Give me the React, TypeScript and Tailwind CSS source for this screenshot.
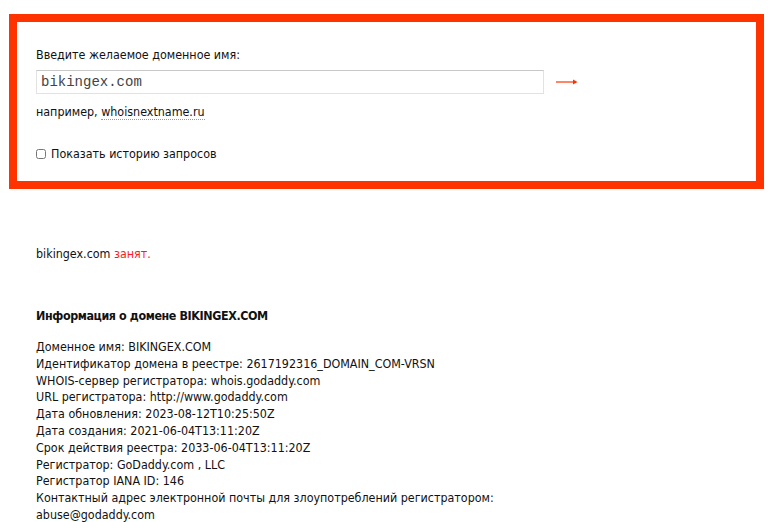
import React from 'react'

const whois = [
  'Доменное имя: BIKINGEX.COM',
  'Идентификатор домена в реестре: 2617192316_DOMAIN_COM-VRSN',
  'WHOIS-сервер регистратора: whois.godaddy.com',
  'URL регистратора: http://www.godaddy.com',
  'Дата обновления: 2023-08-12T10:25:50Z',
  'Дата создания: 2021-06-04T13:11:20Z',
  'Срок действия реестра: 2033-06-04T13:11:20Z',
  'Регистратор: GoDaddy.com , LLC',
  'Регистратор IANA ID: 146',
  'Контактный адрес электронной почты для злоупотреблений регистратором:',
  'abuse@godaddy.com',
]

const App = () => {
  return (
    <div className="min-h-[522px] bg-white text-[#111] text-[12.4px] font-['DejaVu_Sans_Condensed','DejaVu_Sans',sans-serif] pt-[14px]">
      <div className="ml-[9px] mr-[4px] border-[8px] border-[#ff3300] pl-[19px] pt-[24px] pb-[19px]">
        <p className="leading-[17px]">Введите желаемое доменное имя:</p>
        <div className="flex items-center mt-[7px]">
          <input
            defaultValue="bikingex.com"
            className="w-[508px] h-[24px] border border-[#e2e2e2] border-t-[#c8c8c8] px-[4px] font-['Liberation_Mono',monospace] text-[14px] text-[#444] outline-none"
          />
          <svg width="22" height="8" viewBox="0 0 22 8" className="ml-[12px] -mt-[1px]">
            <line x1="0" y1="4" x2="20" y2="4" stroke="#ff3300" strokeWidth="1.2" />
            <path d="M17 1.5 L21.5 4 L17 6.5 Z" fill="#ff3300" />
          </svg>
        </div>
        <p className="leading-[17px] mt-[9px]">
          например, <a className="border-b border-dotted border-[#999]">whoisnextname.ru</a>
        </p>
        <label className="flex items-center leading-[17px] mt-[25px]">
          <input type="checkbox" className="w-[10px] h-[10px] mr-[5px]" />
          Показать историю запросов
        </label>
      </div>

      <div className="px-[36px]">
        <p className="leading-[17px] mt-[56px]">
          bikingex.com <span className="text-[#ff1a1a]">занят.</span>
        </p>
        <h3 className="font-bold leading-[17px] mt-[45px] tracking-[-0.4px]">Информация о домене BIKINGEX.COM</h3>
        <div className="mt-[15px] leading-[16.8px]">
          {whois.map((line) => (
            <p key={line}>{line}</p>
          ))}
        </div>
      </div>
    </div>
  )
}

export default App
